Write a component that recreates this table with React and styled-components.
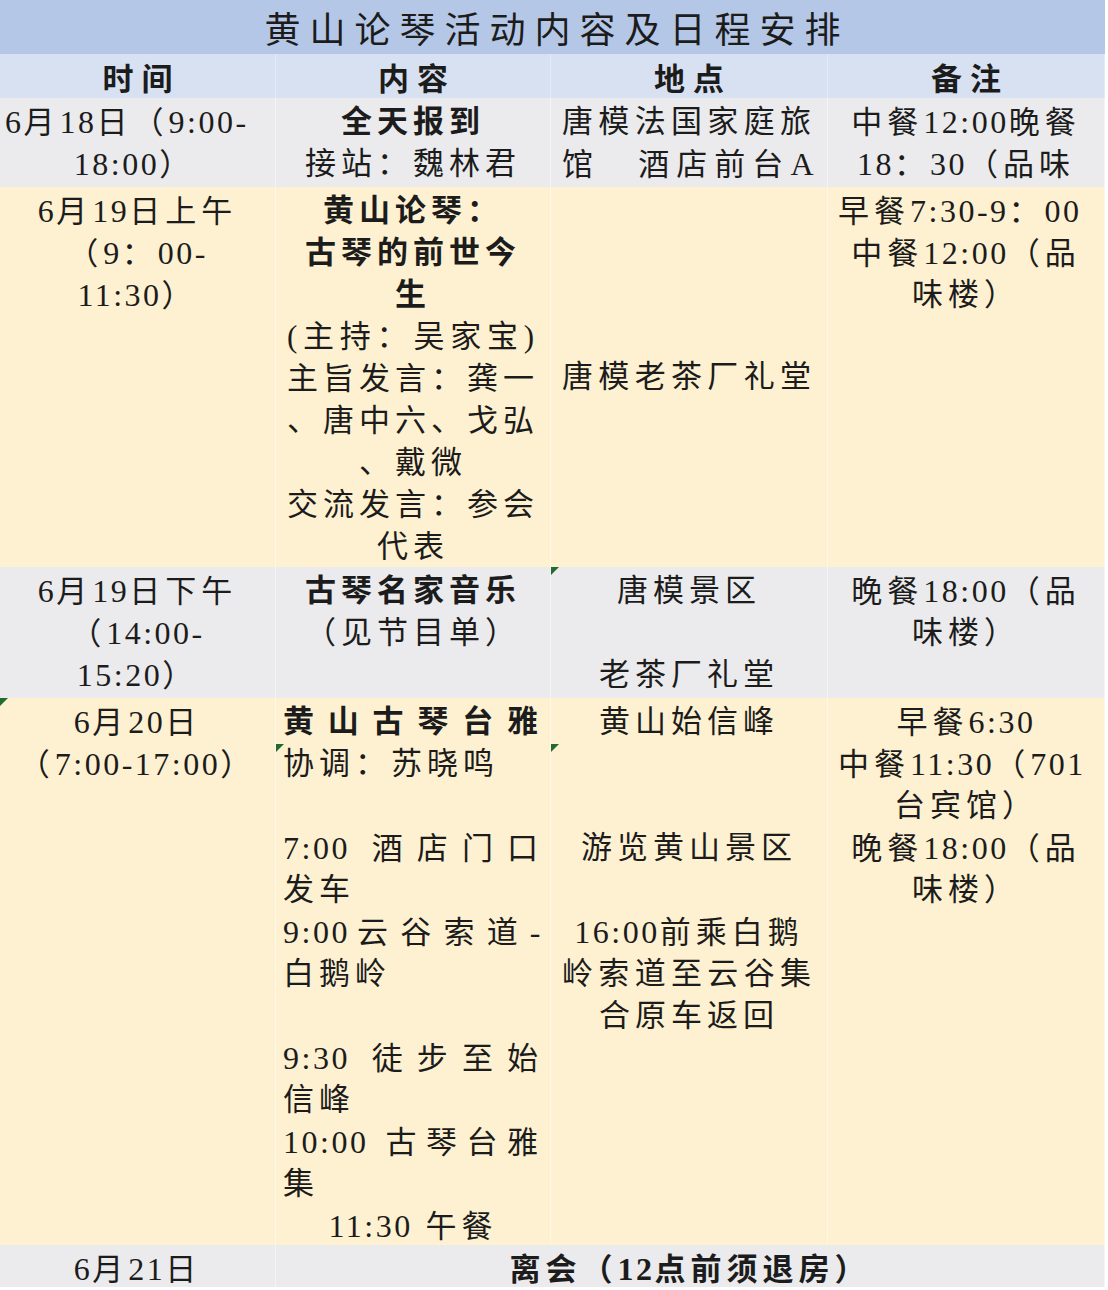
import styled, { createGlobalStyle, css } from "styled-components";

const GlobalStyle = createGlobalStyle`
  html, body {
    margin: 0;
    padding: 0;
    background: #ffffff;
  }
  body {
    font-family: "Liberation Serif", "Noto Sans CJK SC", serif;
    color: #1c1c1c;
  }
`;

const colors = {
  title: "#b5c7e6",
  header: "#d8e1f1",
  gray: "#ebebed",
  yellow: "#fef1d1",
};

// one row of the sheet = list of cells, each cell = list of lines
// line: [text, align, bold]
const rows = [
  {
    bg: "gray",
    height: 89,
    cells: [
      { lines: [["6月18日（9:00-", "left"], ["18:00）"]], pl: 5 },
      { lines: [["全天报到", "center", true], ["接站：魏林君"]] },
      { lines: [["唐模法国家庭旅", "justify"], ["馆　酒店前台A", "justify"]] },
      { lines: [["中餐12:00晚餐"], ["18：30（品味"]] },
    ],
  },
  {
    bg: "yellow",
    height: 380,
    cells: [
      { lines: [["6月19日上午"], ["（9：00-"], ["11:30）"]] },
      {
        lines: [
          ["黄山论琴：", "center", true],
          ["古琴的前世今", "center", true],
          ["生", "center", true],
          ["(主持：吴家宝)", "justify"],
          ["主旨发言：龚一", "justify"],
          ["、唐中六、戈弘", "justify"],
          ["、戴微"],
          ["交流发言：参会", "justify"],
          ["代表"],
        ],
      },
      { lines: [["唐模老茶厂礼堂", "justify"]], middle: true },
      { lines: [["早餐7:30-9：00", "left"], ["中餐12:00（品"], ["味楼）"]], px: 10 },
    ],
  },
  {
    bg: "gray",
    height: 131,
    cells: [
      { lines: [["6月19日下午"], ["（14:00-"], ["15:20）"]] },
      { lines: [["古琴名家音乐", "center", true], ["（见节目单）"]] },
      { lines: [["唐模景区"], [""], ["老茶厂礼堂"]], marker: 0 },
      { lines: [["晚餐18:00（品"], ["味楼）"]] },
    ],
  },
  {
    bg: "yellow",
    height: 547,
    cells: [
      { lines: [["6月20日"], ["（7:00-17:00）"]], marker: 0 },
      {
        lines: [
          ["黄山古琴台雅", "justify", true],
          ["协调：苏晓鸣", "left"],
          [""],
          ["7:00 酒店门口", "justify"],
          ["发车", "left"],
          ["9:00云谷索道-", "justify"],
          ["白鹅岭", "left"],
          [""],
          ["9:30 徒步至始", "justify"],
          ["信峰", "left"],
          ["10:00 古琴台雅", "justify"],
          ["集", "left"],
          ["11:30 午餐"],
        ],
        marker: 46,
        px: 7,
      },
      {
        lines: [
          ["黄山始信峰"],
          [""],
          [""],
          ["游览黄山景区"],
          [""],
          ["16:00前乘白鹅"],
          ["岭索道至云谷集", "justify"],
          ["合原车返回"],
        ],
        marker: 46,
      },
      {
        lines: [
          ["早餐6:30"],
          ["中餐11:30（701", "left"],
          ["台宾馆）"],
          ["晚餐18:00（品"],
          ["味楼）"],
        ],
        px: 10,
      },
    ],
  },
];

// digits and latin runs are set tighter than the CJK characters
const withLatin = (text) =>
  text.split(/([0-9:\-A]+)/).map((part, i) =>
    /^[0-9:\-A]+$/.test(part) ? <Latin key={i}>{part}</Latin> : part
  );

export default function App() {
  return (
    <>
      <GlobalStyle />
      <Sheet>
        <Title>黄山论琴活动内容及日程安排</Title>
        {["时间", "内容", "地点", "备注"].map((h) => (
          <HeaderCell key={h}>{h}</HeaderCell>
        ))}
        {rows.map((row, r) =>
          row.cells.map((cell, c) => (
            <Cell
              key={`${r}-${c}`}
              $bg={row.bg}
              $h={row.height}
              $middle={cell.middle}
              $pl={cell.pl}
              $px={cell.px}
            >
              {cell.marker !== undefined && <Marker $top={cell.marker} />}
              {cell.lines.map(([text, align = "center", bold], i) => (
                <Line key={i} $align={align} $bold={bold}>
                  {text ? withLatin(text) : "\u00a0"}
                </Line>
              ))}
            </Cell>
          ))
        )}
        <Cell $bg="gray" $h={42}>
          <Line $align="center">{withLatin("6月21日")}</Line>
        </Cell>
        <Cell $bg="gray" $h={42} $span={3}>
          <Line $align="center" $bold>
            {withLatin("离会（12点前须退房）")}
          </Line>
        </Cell>
      </Sheet>
    </>
  );
}

const Sheet = styled.div`
  display: grid;
  grid-template-columns: 276px 275px 277px 277px;
  width: 1105px;
`;

const Title = styled.div`
  grid-column: 1 / -1;
  height: 54px;
  background: ${colors.title};
  display: flex;
  align-items: center;
  justify-content: center;
  font-size: 36px;
  letter-spacing: 9px;
  padding-left: 9px;
  box-sizing: border-box;
`;

const HeaderCell = styled.div`
  height: 44px;
  background: ${colors.header};
  display: flex;
  align-items: center;
  justify-content: center;
  font-size: 31px;
  font-weight: 700;
  letter-spacing: 8px;
  padding-left: 8px;
  box-sizing: border-box;
  border-right: 1px solid rgba(255, 255, 255, 0.35);
`;

const Cell = styled.div`
  position: relative;
  box-sizing: border-box;
  height: ${({ $h }) => $h}px;
  background: ${({ $bg }) => colors[$bg]};
  grid-column: span ${({ $span }) => $span || 1};
  padding: 3px ${({ $px }) => $px ?? 11}px 0 ${({ $pl, $px }) => $pl ?? $px ?? 11}px;
  border-right: 1px solid rgba(255, 255, 255, 0.45);
  overflow: hidden;
  display: flex;
  flex-direction: column;
  ${({ $middle }) =>
    $middle &&
    css`
      justify-content: center;
      padding-top: 0;
    `}
`;

const Line = styled.div`
  height: 42px;
  line-height: 42px;
  font-size: 31px;
  letter-spacing: 5px;
  white-space: nowrap;
  font-weight: ${({ $bold }) => ($bold ? 700 : 400)};
  text-align: ${({ $align }) => $align};
  text-align-last: ${({ $align }) => $align};
`;

const Latin = styled.span`
  letter-spacing: 2.5px;
  font-size: 32px;
`;

const Marker = styled.span`
  position: absolute;
  left: 0;
  top: ${({ $top }) => $top}px;
  width: 0;
  height: 0;
  border-top: 8px solid #1f6b30;
  border-right: 8px solid transparent;
`;
